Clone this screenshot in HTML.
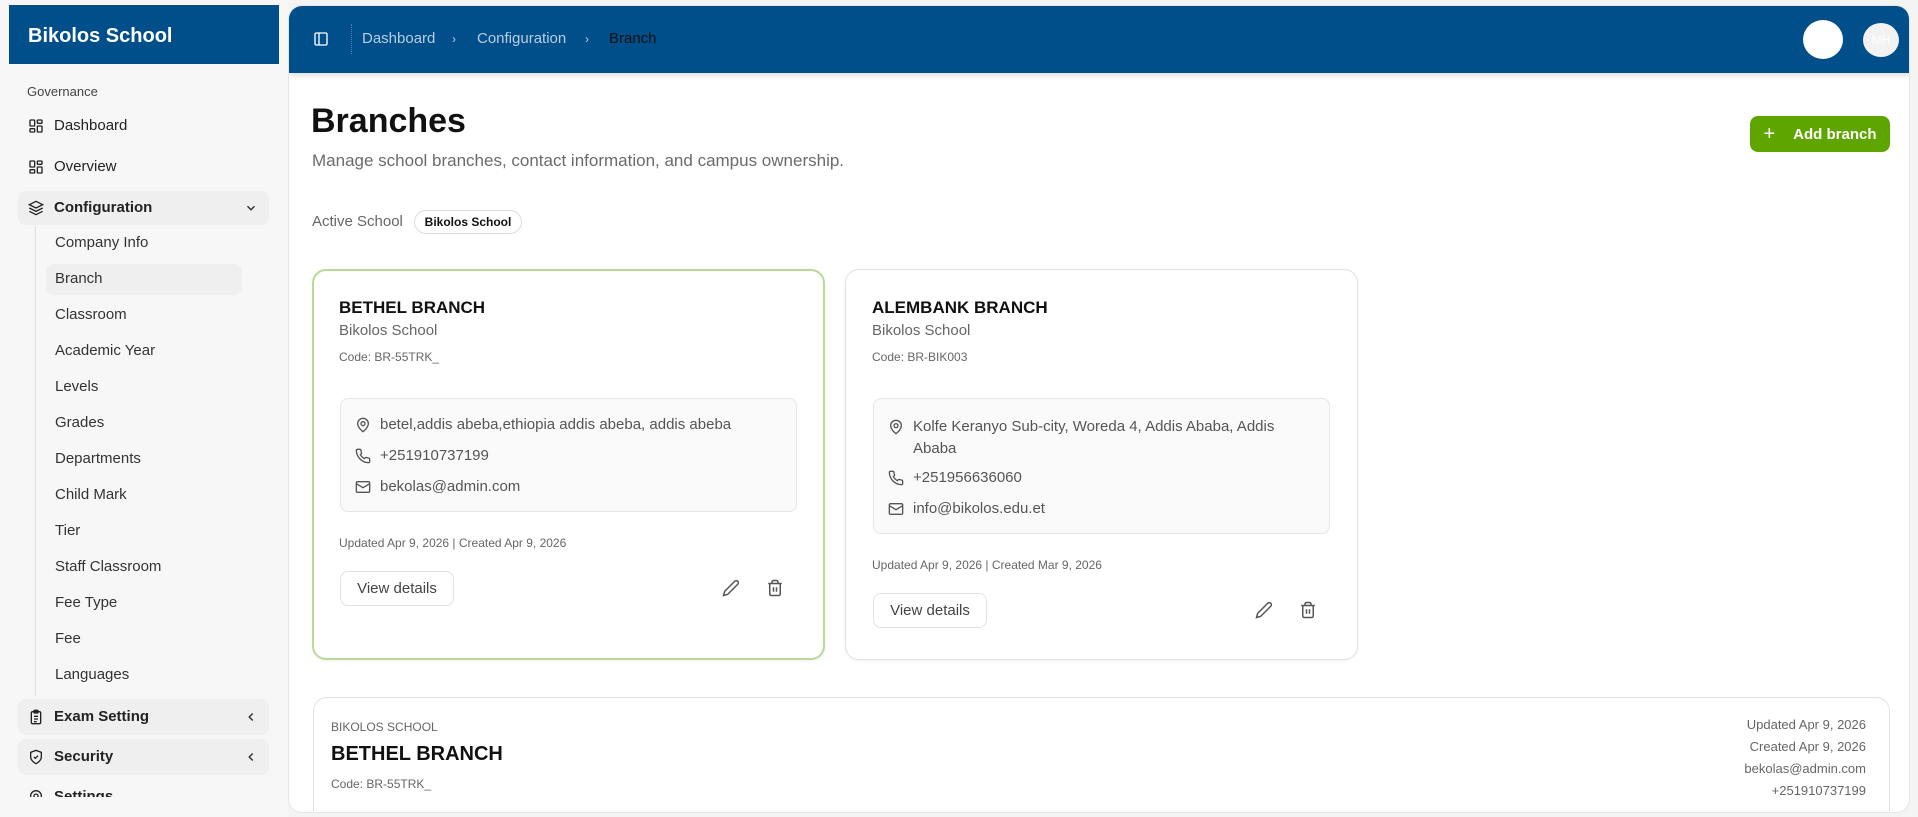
<!DOCTYPE html>
<html><head><meta charset="utf-8"><style>
*{box-sizing:border-box;margin:0;padding:0}
body{width:1918px;height:817px;overflow:hidden;background:#f4f4f4;font-family:"Liberation Sans",sans-serif;color:#111;position:relative}
.abs{position:absolute}
.side{left:0;top:0;width:288px;height:817px;background:#f7f7f7}
.brand{left:9px;top:5px;width:270px;height:59px;background:#004f8a;color:#fff;font-weight:bold;font-size:20px;padding:20px 0 0 19px}
.gov{left:27px;top:84px;font-size:13px;color:#444}
.nav{left:28px;font-size:15px;color:#222;display:flex;align-items:center;gap:10px}
.nav svg{width:16px;height:16px}
.sub{left:55px;font-size:15px;color:#333}
.grp{left:18px;width:251px;height:34px;background:#efefef;border-radius:8px}
.main{left:288px;top:5px;width:1622px;height:808px;background:#fff;border-radius:14px;overflow:hidden;border:1px solid #e6e6e6}
.top{left:0;top:0;width:1622px;height:67px;background:#004f8a;box-shadow:0 3px 5px rgba(0,0,0,.12)}
.bc{top:24px;font-size:15px;color:#b9cde2}
.card{background:#fff;border:1px solid #e2e2e2;border-radius:14px;box-shadow:0 1px 3px rgba(0,0,0,.06)}
.t1{font-size:17px;font-weight:600;color:#111}
.g{color:#666}
.box{background:#fafafa;border:1px solid #e6e6e6;border-radius:8px}
.row{display:flex;gap:9px;align-items:flex-start;font-size:15px;color:#555}
.row svg{width:16px;height:16px;flex:none;margin-top:1px}
.btn{border:1px solid #e2e2e2;border-radius:8px;font-size:15px;color:#444;background:#fff;display:flex;align-items:center;justify-content:center}
</style></head><body>
<div class="abs side"></div>
<div class="abs brand">Bikolos School</div>
<div class="abs gov">Governance</div>
<div class="abs nav" style="top:117px"><svg viewBox="0 0 24 24" fill="none" stroke="#222" stroke-width="2"><rect x="3" y="3" width="7" height="9" rx="1"/><rect x="14" y="3" width="7" height="5" rx="1"/><rect x="14" y="12" width="7" height="9" rx="1"/><rect x="3" y="16" width="7" height="5" rx="1"/></svg>Dashboard</div>
<div class="abs nav" style="top:158px"><svg viewBox="0 0 24 24" fill="none" stroke="#222" stroke-width="2"><rect x="3" y="3" width="7" height="9" rx="1"/><rect x="14" y="3" width="7" height="5" rx="1"/><rect x="14" y="12" width="7" height="9" rx="1"/><rect x="3" y="16" width="7" height="5" rx="1"/></svg>Overview</div>
<div class="abs grp" style="top:191px"></div>
<div class="abs nav" style="top:199px;font-weight:bold"><svg viewBox="0 0 24 24" fill="none" stroke="#222" stroke-width="2"><path d="M12 2 2 7l10 5 10-5-10-5z"/><path d="m2 12 10 5 10-5"/><path d="m2 17 10 5 10-5"/></svg>Configuration</div>
<svg class="abs" style="left:244px;top:201px" width="14" height="14" viewBox="0 0 24 24" fill="none" stroke="#333" stroke-width="2.5"><path d="m6 9 6 6 6-6"/></svg>
<div class="abs" style="left:35px;top:226px;width:1px;height:470px;background:#e0e0e0"></div>
<div class="abs" style="left:46px;top:264px;width:196px;height:31px;background:#efefef;border-radius:8px"></div>
<div class="abs sub" style="top:234px">Company Info</div>
<div class="abs sub" style="top:270px">Branch</div>
<div class="abs sub" style="top:306px">Classroom</div>
<div class="abs sub" style="top:342px">Academic Year</div>
<div class="abs sub" style="top:378px">Levels</div>
<div class="abs sub" style="top:414px">Grades</div>
<div class="abs sub" style="top:450px">Departments</div>
<div class="abs sub" style="top:486px">Child Mark</div>
<div class="abs sub" style="top:522px">Tier</div>
<div class="abs sub" style="top:558px">Staff Classroom</div>
<div class="abs sub" style="top:594px">Fee Type</div>
<div class="abs sub" style="top:630px">Fee</div>
<div class="abs sub" style="top:666px">Languages</div>
<div class="abs grp" style="top:699px;height:36px"></div>
<div class="abs nav" style="top:708px;font-weight:bold"><svg viewBox="0 0 24 24" fill="none" stroke="#222" stroke-width="2"><rect x="5" y="4" width="14" height="18" rx="2"/><rect x="9" y="2" width="6" height="4" rx="1"/><path d="M9 11h6M9 15h6M9 19h4"/></svg>Exam Setting</div>
<svg class="abs" style="left:244px;top:710px" width="14" height="14" viewBox="0 0 24 24" fill="none" stroke="#333" stroke-width="2.5"><path d="m15 6-6 6 6 6"/></svg>
<div class="abs grp" style="top:739px;height:36px"></div>
<div class="abs nav" style="top:748px;font-weight:bold"><svg viewBox="0 0 24 24" fill="none" stroke="#222" stroke-width="2"><path d="M12 22s8-4 8-10V5l-8-3-8 3v7c0 6 8 10 8 10z"/><path d="m9 12 2 2 4-4"/></svg>Security</div>
<svg class="abs" style="left:244px;top:750px" width="14" height="14" viewBox="0 0 24 24" fill="none" stroke="#333" stroke-width="2.5"><path d="m15 6-6 6 6 6"/></svg>
<div class="abs nav" style="top:788px;font-weight:bold;height:9px;overflow:hidden;align-items:flex-start"><svg viewBox="0 0 24 24" fill="none" stroke="#222" stroke-width="2"><circle cx="12" cy="12" r="3"/><circle cx="12" cy="12" r="8"/></svg>Settings</div>

<div class="abs main">
 <div class="abs top">
  <svg class="abs" style="left:24px;top:25px" width="16" height="16" viewBox="0 0 24 24" fill="none" stroke="#fff" stroke-width="2"><rect x="3" y="3" width="18" height="18" rx="2"/><path d="M9 3v18"/></svg>
  <div class="abs" style="left:62px;top:18px;width:1px;height:30px;border-left:1px dotted #4a82b8"></div>
  <div class="abs bc" style="left:73px">Dashboard</div>
  <div class="abs bc" style="left:163px;font-size:12px;top:26px">›</div>
  <div class="abs bc" style="left:188px">Configuration</div>
  <div class="abs bc" style="left:296px;font-size:12px;top:26px">›</div>
  <div class="abs bc" style="left:320px;color:#111">Branch</div>
  <div class="abs" style="left:1514px;top:14px;width:40px;height:39px;border-radius:50%;background:#fff"></div>
  <div class="abs" style="left:1574px;top:17px;width:36px;height:34px;border-radius:50%;background:#f2f2f2;color:#fff;font-size:12px;text-align:center;line-height:34px">MH</div>
 </div>
 <div class="abs" style="left:22px;top:96px;font-size:34px;font-weight:bold">Branches</div>
 <div class="abs" style="left:23px;top:145px;font-size:17px;color:#6b6b6b">Manage school branches, contact information, and campus ownership.</div>
 <div class="abs" style="left:1461px;top:110px;width:140px;height:36px;background:#5fa500;border-radius:8px;color:#fff;font-weight:bold;font-size:15px;display:flex;align-items:center;justify-content:center;gap:18px"><span style="font-size:20px;font-weight:normal">+</span>Add branch</div>
 <div class="abs" style="left:23px;top:207px;font-size:15px;color:#666">Active School</div>
 <div class="abs" style="left:125px;top:204px;width:108px;height:24px;border:1px solid #ddd;border-radius:12px;font-size:12px;font-weight:bold;text-align:center;line-height:22px">Bikolos School</div>

 <div class="abs card" style="left:23px;top:263px;width:513px;height:391px;border:2px solid #b9d99a">
  <div class="abs t1" style="left:25px;top:27px">BETHEL BRANCH</div>
  <div class="abs g" style="left:25px;top:51px;font-size:15px">Bikolos School</div>
  <div class="abs g" style="left:25px;top:79px;font-size:12px">Code: BR-55TRK_</div>
  <div class="abs box" style="left:26px;top:127px;width:457px;height:114px">
   <div class="abs row" style="left:14px;top:17px"><svg viewBox="0 0 24 24" fill="none" stroke="#555" stroke-width="2"><path d="M20 10c0 6-8 12-8 12s-8-6-8-12a8 8 0 0 1 16 0z"/><circle cx="12" cy="10" r="3"/></svg>betel,addis abeba,ethiopia addis abeba, addis abeba</div>
   <div class="abs row" style="left:14px;top:48px"><svg viewBox="0 0 24 24" fill="none" stroke="#555" stroke-width="2"><path d="M22 17v3a2 2 0 0 1-2 2A19 19 0 0 1 2 4a2 2 0 0 1 2-2h3a2 2 0 0 1 2 2c.1 1 .4 2 .7 2.8a2 2 0 0 1-.5 2L8 10a16 16 0 0 0 6 6l1.3-1.3a2 2 0 0 1 2-.4c.9.3 1.8.6 2.8.7a2 2 0 0 1 1.9 2z"/></svg>+251910737199</div>
   <div class="abs row" style="left:14px;top:79px"><svg viewBox="0 0 24 24" fill="none" stroke="#555" stroke-width="2"><rect x="2" y="4" width="20" height="16" rx="2"/><path d="m2 7 10 6 10-6"/></svg>bekolas@admin.com</div>
  </div>
  <div class="abs g" style="left:25px;top:265px;font-size:12px">Updated Apr 9, 2026 | Created Apr 9, 2026</div>
  <div class="abs btn" style="left:26px;top:300px;width:114px;height:35px">View details</div>
  <svg class="abs" style="left:408px;top:308px" width="18" height="18" viewBox="0 0 24 24" fill="none" stroke="#555" stroke-width="2"><path d="M17 3a2.8 2.8 0 1 1 4 4L7.5 20.5 2 22l1.5-5.5z"/></svg>
  <svg class="abs" style="left:452px;top:308px" width="18" height="18" viewBox="0 0 24 24" fill="none" stroke="#555" stroke-width="2"><path d="M3 6h18M19 6v14a2 2 0 0 1-2 2H7a2 2 0 0 1-2-2V6M8 6V4a2 2 0 0 1 2-2h4a2 2 0 0 1 2 2v2M10 11v6M14 11v6"/></svg>
 </div>

 <div class="abs card" style="left:556px;top:263px;width:513px;height:391px">
  <div class="abs t1" style="left:26px;top:28px">ALEMBANK BRANCH</div>
  <div class="abs g" style="left:26px;top:52px;font-size:15px">Bikolos School</div>
  <div class="abs g" style="left:26px;top:80px;font-size:12px">Code: BR-BIK003</div>
  <div class="abs box" style="left:27px;top:128px;width:457px;height:136px">
   <div class="abs row" style="left:14px;top:17px;width:420px;line-height:22px"><svg viewBox="0 0 24 24" fill="none" stroke="#555" stroke-width="2" style="margin-top:3px"><path d="M20 10c0 6-8 12-8 12s-8-6-8-12a8 8 0 0 1 16 0z"/><circle cx="12" cy="10" r="3"/></svg><span>Kolfe Keranyo Sub-city, Woreda 4, Addis Ababa, Addis Ababa</span></div>
   <div class="abs row" style="left:14px;top:70px"><svg viewBox="0 0 24 24" fill="none" stroke="#555" stroke-width="2"><path d="M22 17v3a2 2 0 0 1-2 2A19 19 0 0 1 2 4a2 2 0 0 1 2-2h3a2 2 0 0 1 2 2c.1 1 .4 2 .7 2.8a2 2 0 0 1-.5 2L8 10a16 16 0 0 0 6 6l1.3-1.3a2 2 0 0 1 2-.4c.9.3 1.8.6 2.8.7a2 2 0 0 1 1.9 2z"/></svg>+251956636060</div>
   <div class="abs row" style="left:14px;top:101px"><svg viewBox="0 0 24 24" fill="none" stroke="#555" stroke-width="2"><rect x="2" y="4" width="20" height="16" rx="2"/><path d="m2 7 10 6 10-6"/></svg>info@bikolos.edu.et</div>
  </div>
  <div class="abs g" style="left:26px;top:288px;font-size:12px">Updated Apr 9, 2026 | Created Mar 9, 2026</div>
  <div class="abs btn" style="left:27px;top:323px;width:114px;height:35px">View details</div>
  <svg class="abs" style="left:409px;top:331px" width="18" height="18" viewBox="0 0 24 24" fill="none" stroke="#555" stroke-width="2"><path d="M17 3a2.8 2.8 0 1 1 4 4L7.5 20.5 2 22l1.5-5.5z"/></svg>
  <svg class="abs" style="left:453px;top:331px" width="18" height="18" viewBox="0 0 24 24" fill="none" stroke="#555" stroke-width="2"><path d="M3 6h18M19 6v14a2 2 0 0 1-2 2H7a2 2 0 0 1-2-2V6M8 6V4a2 2 0 0 1 2-2h4a2 2 0 0 1 2 2v2M10 11v6M14 11v6"/></svg>
 </div>

 <div class="abs card" style="left:24px;top:691px;width:1577px;height:140px;box-shadow:none">
  <div class="abs g" style="left:17px;top:22px;font-size:12px">BIKOLOS SCHOOL</div>
  <div class="abs" style="left:17px;top:45px;font-size:20px;font-weight:600">BETHEL BRANCH</div>
  <div class="abs g" style="left:17px;top:79px;font-size:12px">Code: BR-55TRK_</div>
  <div class="abs g" style="right:23px;top:16px;font-size:13px;text-align:right;line-height:22px">Updated Apr 9, 2026<br>Created Apr 9, 2026<br>bekolas@admin.com<br>+251910737199</div>
 </div>
</div>
</body></html>
